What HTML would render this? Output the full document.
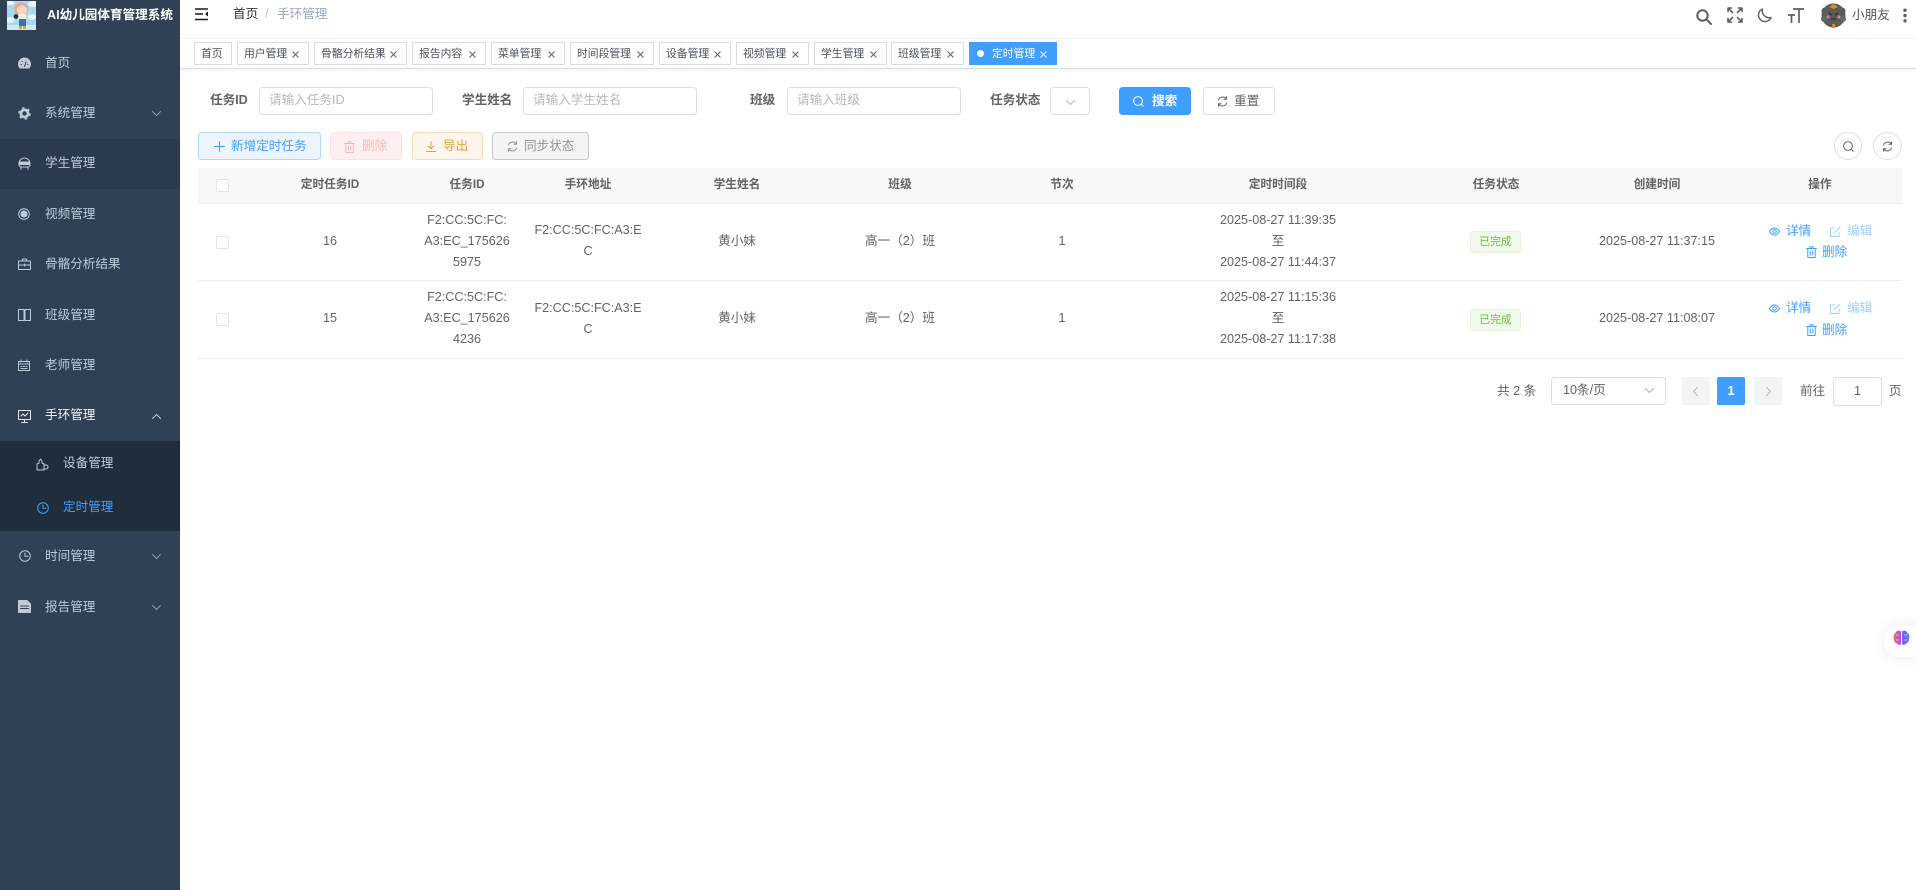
<!DOCTYPE html>
<html lang="zh"><head><meta charset="utf-8"><title>手环管理</title>
<style>
*{box-sizing:border-box}
html,body{margin:0;padding:0}
body{width:1916px;height:890px;overflow:hidden;background:#fff;position:relative;font-family:"Liberation Sans","Noto Sans CJK SC",sans-serif;font-size:12.6px;color:#606266}
.a{position:absolute}
.t{position:absolute;white-space:nowrap;line-height:18px}
.c{transform:translateX(-50%);text-align:center}
svg{display:block;overflow:visible}
svg.i{position:absolute;fill:none;stroke:currentColor;stroke-width:1;stroke-linecap:round;stroke-linejoin:round}
#side{position:absolute;left:0;top:0;width:180px;height:890px;background:#304156}
.mi{position:absolute;left:45px;color:#bfcbd9;line-height:18px;white-space:nowrap}
.tag{position:absolute;top:42px;height:23px;border:1px solid #d8dce5;background:#fff;color:#495060;font-size:10.8px;line-height:22px;padding-left:6px;white-space:nowrap}
.tag svg{position:absolute;right:9px;top:8px;width:7px;height:7px;stroke:#5c6270;stroke-width:1;fill:none}
.inp{position:absolute;top:87px;height:28px;border:1px solid #dcdfe6;border-radius:3.6px;background:#fff;color:#b5b8bf;padding-left:9px;line-height:24px;font-size:12.6px}
.lab{position:absolute;top:91px;line-height:18px;font-weight:700;color:#606266;white-space:nowrap}
.btn{position:absolute;height:28px;border:1px solid;border-radius:3.6px;font-size:12.6px;line-height:26px;white-space:nowrap}
.th{position:absolute;top:176px;font-weight:700;color:#606266;font-size:11.7px;line-height:18px;transform:translateX(-50%);white-space:nowrap}
.cell{position:absolute;line-height:21px;text-align:center;transform:translateX(-50%);white-space:nowrap;font-size:12.6px;color:#606266}
.chk{position:absolute;left:216px;width:13px;height:13px;border:1px solid #e2e4ea;border-radius:2px;background:#fff}
.hr{position:absolute;left:198px;width:1704px;height:1px;background:#ebeef5}
.st{position:absolute;left:1470px;width:51px;height:22px;background:#f0f9eb;border:1px solid #e1f3d8;border-radius:3.6px;color:#67c23a;font-size:10.8px;line-height:20px;text-align:center}
.op{position:absolute;color:#409eff;font-size:12.6px;line-height:18px;white-space:nowrap}
</style></head><body>

<div id="side">
  <svg class="a" style="left:7px;top:1px;overflow:hidden" width="29" height="29" viewBox="0 0 29 29">
    <rect width="29" height="29" fill="#a9d8f0"/>
    <ellipse cx="26" cy="3" rx="5" ry="3" fill="#eef7fb"/><ellipse cx="3" cy="2" rx="4" ry="2" fill="#eef7fb"/><ellipse cx="25" cy="16" rx="4" ry="3" fill="#e6f4fb"/><ellipse cx="3" cy="19" rx="5" ry="3" fill="#e6f4fb"/>
    <rect y="24" width="29" height="5" fill="#cfe9f6"/>
    <ellipse cx="14" cy="8" rx="7" ry="6.5" fill="#e2ad8c"/>
    <ellipse cx="15" cy="9" rx="5" ry="4.6" fill="#f7d6c4"/>
    <rect x="11" y="13" width="8" height="6" fill="#f2efe8"/>
    <rect x="12" y="18" width="7" height="7" fill="#3c70a8"/>
    <circle cx="9" cy="15.5" r="2.4" fill="#25323c"/>
    <rect x="12" y="25" width="3" height="3" fill="#d9a441"/><rect x="16" y="25" width="3" height="3" fill="#d9a441"/>
  </svg>
  <div class="t" style="left:47px;top:6px;color:#fff;font-weight:700;font-size:12.6px">AI幼儿园体育管理系统</div>

  <div class="a" style="left:0;top:139px;width:180px;height:50px;background:#2b3a4f"></div>
  <div class="a" style="left:0;top:441px;width:180px;height:90px;background:#1f2d3d"></div>

  <div class="mi" style="top:54px">首页</div>
  <div class="mi" style="top:104px">系统管理</div>
  <div class="mi" style="top:154px">学生管理</div>
  <div class="mi" style="top:205px">视频管理</div>
  <div class="mi" style="top:255px">骨骼分析结果</div>
  <div class="mi" style="top:306px">班级管理</div>
  <div class="mi" style="top:356px">老师管理</div>
  <div class="mi" style="top:406px;color:#f4f4f5">手环管理</div>
  <div class="mi" style="top:454px;left:63px">设备管理</div>
  <div class="mi" style="top:498px;left:63px;color:#409eff">定时管理</div>
  <div class="mi" style="top:547px">时间管理</div>
  <div class="mi" style="top:598px">报告管理</div>

  <svg class="i" style="left:18px;top:58px;color:#bfcbd9" width="13" height="11" viewBox="0 0 13 11"><path d="M2 10a6 6 0 1 1 9 0z" fill="#bfcbd9"/><path d="M6.500 8.500 8 4M3 6.500h.5M9.500 6.500h.5M4 3.500h.3" stroke="#304156"/></svg>
  <svg class="i" style="left:18px;top:107px;color:#bfcbd9" width="13" height="13" viewBox="0 0 13 13"><circle cx="6.500" cy="6.500" r="3.600" stroke-width="2.800"/><circle cx="6.500" cy="6.500" r="5.600" stroke-width="1.400" stroke-dasharray="2.500 3.400" stroke-linecap="butt"/></svg>
  <svg class="i" style="left:18px;top:157px;color:#bfcbd9" width="13" height="13" viewBox="0 0 13 13"><path d="M1 6.500a5.500 5.500 0 0 1 11 0v2a3 3 0 0 1-2 1.500H3a3 3 0 0 1-2-1.500zM3 10v2.500M10 10v2.500"/><path d="M1.500 5h10v2.500h-10z" fill="#bfcbd9"/></svg>
  <svg class="i" style="left:18px;top:208px;color:#bfcbd9" width="12" height="12" viewBox="0 0 12 12"><circle cx="6" cy="6" r="5.300"/><circle cx="6" cy="6" r="3" fill="#bfcbd9"/></svg>
  <svg class="i" style="left:18px;top:258px;color:#bfcbd9" width="13" height="12" viewBox="0 0 13 12"><path d="M.5 3h12v8.500H.5zM4.500 3V1h4v2M.5 7h12M6.500 6v2"/></svg>
  <svg class="i" style="left:18px;top:309px;color:#bfcbd9" width="13" height="12" viewBox="0 0 13 12"><path d="M.5.500h5.500v11H.5zM7 .500h5.500v11H7z"/></svg>
  <svg class="i" style="left:18px;top:360px;color:#bfcbd9" width="12" height="11" viewBox="0 0 12 11"><path d="M.5 1.500h11v9H.5zM.5 4h11M3 0v2M9 0v2M3 6.500h1M5.500 6.500h1M8 6.500h1M3 8.500h6"/></svg>
  <svg class="i" style="left:18px;top:410px;color:#e4e8ee" width="13" height="13" viewBox="0 0 13 13"><path d="M.5.500h12v9H.5zM6.500 9.500v3M3.500 12.500h6M3 6l2-2 2 2 3-3"/></svg>
  <svg class="i" style="left:36px;top:458px;color:#bfcbd9" width="13" height="13" viewBox="0 0 13 13"><path d="M1 12V6l2-1V3l1.500-2L6 3v2l2 1v6zM8 7h2a2 2 0 0 1 0 4H8"/></svg>
  <svg class="i" style="left:37px;top:502px;color:#409eff" width="12" height="12" viewBox="0 0 12 12"><circle cx="6" cy="6" r="5.300"/><path d="M6 3v3.300h3"/></svg>
  <svg class="i" style="left:19px;top:550px;color:#bfcbd9" width="12" height="12" viewBox="0 0 12 12"><circle cx="6" cy="6" r="5.300"/><path d="M6 3v3.300h3"/></svg>
  <svg class="i" style="left:18px;top:600px;color:#bfcbd9" width="13" height="13" viewBox="0 0 13 13"><path d="M.5.500H9L12.500 4v8.500H.5z" fill="#bfcbd9"/><path d="M2.500 6h8M2.500 8.500h8" stroke="#304156"/></svg>

  <svg class="i" style="left:152px;top:111px;color:#8e9cac" width="9" height="5" viewBox="0 0 9 5"><path d="M.5.500l4 4 4-4"/></svg>
  <svg class="i" style="left:152px;top:414px;color:#bfcbd9" width="9" height="5" viewBox="0 0 9 5"><path d="M.5 4.500l4-4 4 4"/></svg>
  <svg class="i" style="left:152px;top:554px;color:#8e9cac" width="9" height="5" viewBox="0 0 9 5"><path d="M.5.500l4 4 4-4"/></svg>
  <svg class="i" style="left:152px;top:605px;color:#8e9cac" width="9" height="5" viewBox="0 0 9 5"><path d="M.5.500l4 4 4-4"/></svg>
</div>

<!-- top nav -->
<div class="a" style="left:180px;top:38px;width:1736px;height:1px;background:#f0f1f3"></div>
<svg class="a" style="left:195px;top:8px" width="13" height="13" viewBox="0 0 13 13"><path d="M0 1h13M0 6h8M0 11.500h13" stroke="#1a1a1a" stroke-width="1.500"/><path d="M13 3.500v5l-3-2.500z" fill="#1a1a1a"/></svg>
<div class="t" style="left:233px;top:5px;color:#303133">首页</div>
<div class="t" style="left:265px;top:5px;color:#c0c4cc">/</div>
<div class="t" style="left:277px;top:5px;color:#97a8be">手环管理</div>

<svg class="i" style="left:1696px;top:9px;color:#5a5e66;stroke-width:2" width="16" height="16" viewBox="0 0 16 16"><circle cx="6.500" cy="6.500" r="5.200"/><path d="M10.500 10.500l4.500 4.500"/></svg>
<svg class="i" style="left:1727px;top:7px;color:#5a5e66;stroke-width:1.600" width="16" height="16" viewBox="0 0 16 16"><path d="M5.500 5.500l-4-4M1 4.500V1h3.500M10.500 5.500l4-4M11.500 1H15v3.500M5.500 10.500l-4 4M1 11.500V15h3.500M10.500 10.500l4 4M15 11.500V15h-3.500"/></svg>
<svg class="i" style="left:1757px;top:8px;color:#5a5e66;stroke-width:1.400" width="15" height="15" viewBox="0 0 15 15"><path d="M5.500 1a6.500 6.500 0 1 0 8.500 8.500A7 7 0 0 1 5.500 1z"/></svg>
<svg class="i" style="left:1788px;top:7px;color:#5a5e66;stroke-width:1.700;stroke-linecap:butt" width="16" height="16" viewBox="0 0 16 16"><path d="M5 2h11M11 2v14M0 8h7M3.500 8v8"/></svg>
<svg class="a" style="left:1820px;top:2px" width="27" height="27" viewBox="0 0 27 27"><circle cx="13.500" cy="13.500" r="12" fill="#5b5b5b"/><circle cx="5" cy="9" r="3.500" fill="#5b5b5b"/><circle cx="22" cy="9" r="3.500" fill="#5b5b5b"/><circle cx="4" cy="17" r="3" fill="#666"/><circle cx="23" cy="17" r="3" fill="#666"/><path d="M9 5l4.500-3L18 5l-4.500 2z" fill="#d58a2e"/><circle cx="8" cy="15" r="1.500" fill="#c98a8a"/><circle cx="19" cy="15" r="1.500" fill="#c98a8a"/><path d="M9 11l3 2M18 11l-3 2M11 17h5" stroke="#222" fill="none"/><rect x="12" y="22" width="3" height="4" fill="#c88a35"/></svg>
<div class="t" style="left:1852px;top:6px;color:#46586c">小朋友</div>
<svg class="a" style="left:1903px;top:8px" width="4" height="15" viewBox="0 0 4 15"><g fill="#5a5e66"><circle cx="2" cy="2.200" r="1.700"/><circle cx="2" cy="7.500" r="1.700"/><circle cx="2" cy="12.800" r="1.700"/></g></svg>

<!-- tags bar -->
<div class="a" style="left:180px;top:68px;width:1736px;height:1px;background:#d8dce5;box-shadow:0 1px 3px rgba(0,0,0,.12)"></div>
<div class="tag" style="left:194px;width:38px">首页</div>
<div class="tag" style="left:237px;width:72px">用户管理<svg viewBox="0 0 7 7"><path d="M.5.500l6 6M6.500.500l-6 6"/></svg></div>
<div class="tag" style="left:314px;width:93px">骨骼分析结果<svg viewBox="0 0 7 7"><path d="M.5.500l6 6M6.500.500l-6 6"/></svg></div>
<div class="tag" style="left:412px;width:74px">报告内容<svg viewBox="0 0 7 7"><path d="M.5.500l6 6M6.500.500l-6 6"/></svg></div>
<div class="tag" style="left:491px;width:74px">菜单管理<svg viewBox="0 0 7 7"><path d="M.5.500l6 6M6.500.500l-6 6"/></svg></div>
<div class="tag" style="left:570px;width:84px">时间段管理<svg viewBox="0 0 7 7"><path d="M.5.500l6 6M6.500.500l-6 6"/></svg></div>
<div class="tag" style="left:659px;width:72px">设备管理<svg viewBox="0 0 7 7"><path d="M.5.500l6 6M6.500.500l-6 6"/></svg></div>
<div class="tag" style="left:736px;width:73px">视频管理<svg viewBox="0 0 7 7"><path d="M.5.500l6 6M6.500.500l-6 6"/></svg></div>
<div class="tag" style="left:814px;width:73px">学生管理<svg viewBox="0 0 7 7"><path d="M.5.500l6 6M6.500.500l-6 6"/></svg></div>
<div class="tag" style="left:891px;width:73px">班级管理<svg viewBox="0 0 7 7"><path d="M.5.500l6 6M6.500.500l-6 6"/></svg></div>
<div class="tag" style="left:969px;width:88px;background:#409eff;border-color:#409eff;color:#fff;padding-left:22px"><span class="a" style="left:7px;top:7px;width:7px;height:7px;border-radius:50%;background:#fff"></span>定时管理<svg viewBox="0 0 7 7" style="stroke:#fff"><path d="M.5.500l6 6M6.500.500l-6 6"/></svg></div>

<!-- search row -->
<div class="lab" style="left:210px">任务ID</div>
<div class="inp" style="left:259px;width:174px">请输入任务ID</div>
<div class="lab" style="left:462px">学生姓名</div>
<div class="inp" style="left:523px;width:174px">请输入学生姓名</div>
<div class="lab" style="left:750px">班级</div>
<div class="inp" style="left:787px;width:174px">请输入班级</div>
<div class="lab" style="left:990px">任务状态</div>
<div class="inp" style="left:1050px;width:40px"></div>
<svg class="i" style="left:1066px;top:100px;color:#b5b8bf" width="9" height="5" viewBox="0 0 9 5"><path d="M.5.500l4 4 4-4"/></svg>
<div class="btn" style="left:1119px;top:87px;width:72px;background:#409eff;border-color:#409eff;color:#fff;padding-left:32px;font-weight:700">搜索</div>
<svg class="i" style="left:1133px;top:96px;color:#fff" width="11" height="11" viewBox="0 0 11 11"><circle cx="5" cy="5" r="4.400"/><path d="M8.300 8.300l2 2"/></svg>
<div class="btn" style="left:1203px;top:87px;width:72px;background:#fff;border-color:#dcdfe6;color:#606266;padding-left:30px">重置</div>
<svg class="i" style="left:1217px;top:96px;color:#606266" width="11" height="11" viewBox="0 0 11 11"><path d="M1.500 4a4.300 4.300 0 0 1 7.700-1M9.500 7a4.300 4.300 0 0 1-7.700 1M9.500 .8v2.400H7M1.500 10.200V7.800H4"/></svg>

<!-- toolbar -->
<div class="btn" style="left:198px;top:132px;width:123px;background:#ecf5ff;border-color:#b3d8ff;color:#409eff;padding-left:32px">新增定时任务</div>
<svg class="i" style="left:214px;top:141px;color:#409eff" width="11" height="11" viewBox="0 0 11 11"><path d="M5.500.500v10M.5 5.500h10"/></svg>
<div class="btn" style="left:330px;top:132px;width:72px;background:#fef0f0;border-color:#fde2e2;color:#f9b9b9;padding-left:31px">删除</div>
<svg class="i" style="left:344px;top:141px;color:#f9b9b9" width="11" height="12" viewBox="0 0 11 12"><path d="M.5 2.500h10M4 2.500V.8h3v1.700M1.800 2.500v9h7.400v-9M4.300 5v4M6.700 5v4"/></svg>
<div class="btn" style="left:412px;top:132px;width:71px;background:#fdf6ec;border-color:#f5dab1;color:#e6a23c;padding-left:30px">导出</div>
<svg class="i" style="left:426px;top:141px;color:#e6a23c" width="10" height="11" viewBox="0 0 10 11"><path d="M5 .500v7M2 5l3 2.800L8 5M.5 10.500h9"/></svg>
<div class="btn" style="left:492px;top:132px;width:97px;background:#f4f4f5;border-color:#c8c9cc;color:#909399;padding-left:31px">同步状态</div>
<svg class="i" style="left:507px;top:141px;color:#909399" width="11" height="11" viewBox="0 0 11 11"><path d="M1.500 4a4.300 4.300 0 0 1 7.700-1M9.500 7a4.300 4.300 0 0 1-7.700 1M9.500 .8v2.400H7M1.500 10.200V7.800H4"/></svg>

<div class="a" style="left:1834px;top:132px;width:28px;height:28px;border:1px solid #dcdfe6;border-radius:50%"></div>
<svg class="i" style="left:1843px;top:141px;color:#606266" width="11" height="11" viewBox="0 0 11 11"><circle cx="5" cy="5" r="4.400"/><path d="M8.300 8.300l2 2"/></svg>
<div class="a" style="left:1873px;top:132px;width:29px;height:28px;border:1px solid #dcdfe6;border-radius:50%"></div>
<svg class="i" style="left:1882px;top:141px;color:#606266" width="11" height="11" viewBox="0 0 11 11"><path d="M1.500 4a4.300 4.300 0 0 1 7.700-1M9.500 7a4.300 4.300 0 0 1-7.700 1M9.500 .8v2.400H7M1.500 10.200V7.800H4"/></svg>

<!-- table -->
<div class="a" style="left:198px;top:168px;width:1704px;height:35px;background:#f8f8f9"></div>
<div class="hr" style="top:203px"></div>
<div class="hr" style="top:280px"></div>
<div class="hr" style="top:358px"></div>
<div class="chk" style="top:179px"></div>
<div class="th" style="left:330px">定时任务ID</div>
<div class="th" style="left:467px">任务ID</div>
<div class="th" style="left:588px">手环地址</div>
<div class="th" style="left:737px">学生姓名</div>
<div class="th" style="left:900px">班级</div>
<div class="th" style="left:1062px">节次</div>
<div class="th" style="left:1278px">定时时间段</div>
<div class="th" style="left:1496px">任务状态</div>
<div class="th" style="left:1657px">创建时间</div>
<div class="th" style="left:1820px">操作</div>

<!-- row1 -->
<div class="chk" style="top:236px"></div>
<div class="cell" style="left:330px;top:231px">16</div>
<div class="cell" style="left:467px;top:210px">F2:CC:5C:FC:<br>A3:EC_175626<br>5975</div>
<div class="cell" style="left:588px;top:220px">F2:CC:5C:FC:A3:E<br>C</div>
<div class="cell" style="left:737px;top:231px">黄小妹</div>
<div class="cell" style="left:900px;top:231px">高一（2）班</div>
<div class="cell" style="left:1062px;top:231px">1</div>
<div class="cell" style="left:1278px;top:210px">2025-08-27 11:39:35<br>至<br>2025-08-27 11:44:37</div>
<div class="st" style="top:231px">已完成</div>
<div class="cell" style="left:1657px;top:231px">2025-08-27 11:37:15</div>
<svg class="i" style="left:1769px;top:226px;color:#409eff" width="11" height="11" viewBox="0 0 11 11"><path d="M.5 5.500C2 3 3.500 2 5.500 2s3.500 1 5 3.500C9 8 7.500 9 5.500 9S2 8 .5 5.500z"/><circle cx="5.500" cy="5.500" r="1.800"/></svg>
<div class="op" style="left:1786px;top:222px">详情</div>
<svg class="i" style="left:1830px;top:226px;color:#a0cfff" width="11" height="11" viewBox="0 0 11 11"><path d="M9 6.500v4H.5V2h4M4.500 6.500L10 1"/></svg>
<div class="op" style="left:1847px;top:222px;color:#a0cfff">编辑</div>
<svg class="i" style="left:1806px;top:246px;color:#409eff" width="11" height="12" viewBox="0 0 11 12"><path d="M.5 2.500h10M4 2.500V.8h3v1.700M1.800 2.500v9h7.400v-9M4.300 5v4M6.700 5v4"/></svg>
<div class="op" style="left:1822px;top:243px">删除</div>

<!-- row2 -->
<div class="chk" style="top:313px"></div>
<div class="cell" style="left:330px;top:308px">15</div>
<div class="cell" style="left:467px;top:287px">F2:CC:5C:FC:<br>A3:EC_175626<br>4236</div>
<div class="cell" style="left:588px;top:298px">F2:CC:5C:FC:A3:E<br>C</div>
<div class="cell" style="left:737px;top:308px">黄小妹</div>
<div class="cell" style="left:900px;top:308px">高一（2）班</div>
<div class="cell" style="left:1062px;top:308px">1</div>
<div class="cell" style="left:1278px;top:287px">2025-08-27 11:15:36<br>至<br>2025-08-27 11:17:38</div>
<div class="st" style="top:309px">已完成</div>
<div class="cell" style="left:1657px;top:308px">2025-08-27 11:08:07</div>
<svg class="i" style="left:1769px;top:303px;color:#409eff" width="11" height="11" viewBox="0 0 11 11"><path d="M.5 5.500C2 3 3.500 2 5.500 2s3.500 1 5 3.500C9 8 7.500 9 5.500 9S2 8 .5 5.500z"/><circle cx="5.500" cy="5.500" r="1.800"/></svg>
<div class="op" style="left:1786px;top:299px">详情</div>
<svg class="i" style="left:1830px;top:303px;color:#a0cfff" width="11" height="11" viewBox="0 0 11 11"><path d="M9 6.500v4H.5V2h4M4.500 6.500L10 1"/></svg>
<div class="op" style="left:1847px;top:299px;color:#a0cfff">编辑</div>
<svg class="i" style="left:1806px;top:324px;color:#409eff" width="11" height="12" viewBox="0 0 11 12"><path d="M.5 2.500h10M4 2.500V.8h3v1.700M1.800 2.500v9h7.400v-9M4.300 5v4M6.700 5v4"/></svg>
<div class="op" style="left:1822px;top:321px">删除</div>

<!-- pagination -->
<div class="t" style="left:1497px;top:382px">共 2 条</div>
<div class="inp" style="left:1551px;top:377px;width:115px;color:#606266;line-height:24px;padding-left:11px">10条/页</div>
<svg class="i" style="left:1645px;top:388px;color:#a8abb2" width="9" height="5" viewBox="0 0 9 5"><path d="M.5.500l4 4 4-4"/></svg>
<div class="a" style="left:1682px;top:377px;width:28px;height:28px;background:#f4f4f5;border-radius:2px"></div>
<svg class="i" style="left:1693px;top:387px;color:#b4b7bd" width="5" height="9" viewBox="0 0 5 9"><path d="M4.500.500l-4 4 4 4"/></svg>
<div class="a" style="left:1717px;top:377px;width:28px;height:28px;background:#409eff;border-radius:2px;color:#fff;font-weight:700;text-align:center;line-height:28px">1</div>
<div class="a" style="left:1754px;top:377px;width:28px;height:28px;background:#f4f4f5;border-radius:2px"></div>
<svg class="i" style="left:1766px;top:387px;color:#b4b7bd" width="5" height="9" viewBox="0 0 5 9"><path d="M.5.500l4 4-4 4"/></svg>
<div class="t" style="left:1800px;top:382px">前往</div>
<div class="inp" style="left:1833px;top:377px;width:49px;padding:0;text-align:center;color:#606266;line-height:26px;height:29px">1</div>
<div class="t" style="left:1889px;top:382px">页</div>

<!-- floating AI -->
<div class="a" style="left:1884px;top:625px;width:50px;height:32px;background:#fff;border-radius:16px;box-shadow:0 0 14px rgba(0,0,0,.08)"></div>
<svg class="a" style="left:1893px;top:630px" width="17" height="16" viewBox="0 0 17 16"><defs><linearGradient id="g" x1="0" x2="1" y1="0" y2="0"><stop offset="0" stop-color="#f0735a"/><stop offset=".35" stop-color="#c24fe0"/><stop offset=".7" stop-color="#7c5cf5"/><stop offset="1" stop-color="#3d9cf5"/></linearGradient></defs><path d="M8 1.500C6 0 3 .5 2.500 3 .5 4 0 7 1 8.500c-.5 2.500 1 4.500 3 5 1.500 2 3.500 1.500 4 .5zM9 1.500c2-1.500 5-1 5.500 1.500 2 1 2.500 4 1.500 5.500.5 2.500-1 4.500-3 5-1.500 2-3.500 1.500-4 .5z" fill="url(#g)"/><path d="M3 5h3M11 5h3M3 10h3M11 10h3" stroke="#fff" stroke-width=".7" opacity=".7"/></svg>

</body></html>
